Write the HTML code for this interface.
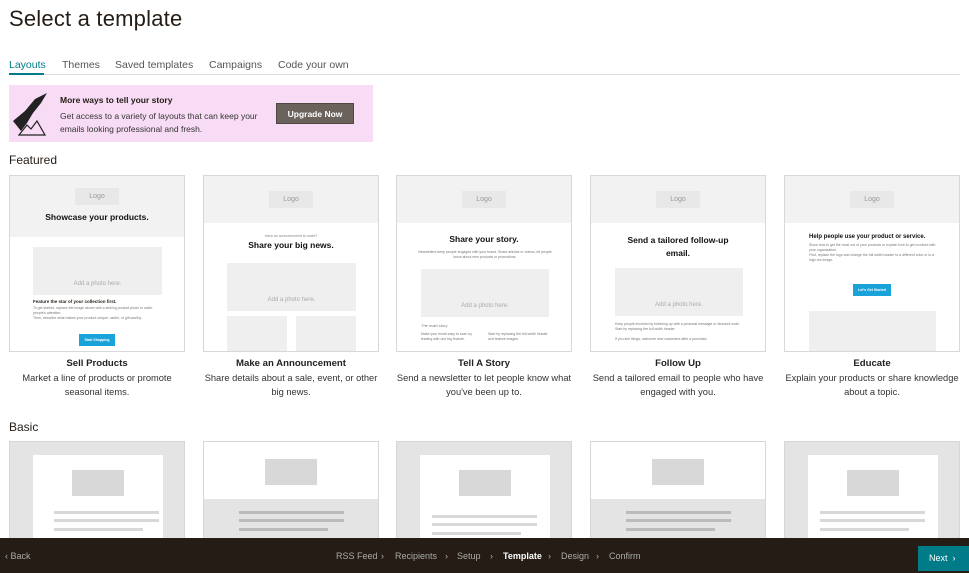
<!DOCTYPE html>
<html><head><meta charset="utf-8"><style>
*{box-sizing:border-box;margin:0;padding:0}
body{width:969px;height:573px;overflow:hidden;background:#fff;font-family:"Liberation Sans",sans-serif;color:#241c15;position:relative}
.abs{position:absolute}
h1{position:absolute;left:9px;top:6px;font-size:22px;font-weight:400;letter-spacing:0.2px}
.tabs{position:absolute;left:9px;top:59px;font-size:10.5px;color:#555}
.tabs span{position:absolute;white-space:nowrap}
.line{position:absolute;left:9px;right:9px;top:74px;height:1px;background:#ddd}
.banner{position:absolute;left:9px;top:85px;width:364px;height:57px;background:#f8dcf5}
.card{position:absolute;width:176px;height:177px;border:1px solid #d8d8d8;background:#fff;overflow:hidden;top:175px}
.hd{background:#f2f2f2;position:absolute;left:0;right:0;top:0}
.logo{position:absolute;width:44px;height:17px;background:#e8e8e8;font-size:7px;color:#999;text-align:center;line-height:17px;left:65px}
.ph{position:absolute;background:#efefef;font-size:6px;color:#aaa;text-align:center}
.t{position:absolute;left:0;right:0;text-align:center;font-weight:bold;color:#111}
.sm{position:absolute;font-size:3.5px;color:#777;line-height:5px}
.btn{position:absolute;background:#1aa3d9;color:#fff;font-size:3.5px;font-weight:bold;text-align:center}
.cap{position:absolute;width:184px;text-align:center;font-size:9.3px;line-height:14px;color:#333;top:357px}
.cap b{display:block;font-weight:bold;color:#222;font-size:9.6px}
.bc{position:absolute;top:441px;width:176px;height:100px;border:1px solid #d6d6d6;overflow:hidden}
.bar{position:absolute;height:3px;background:#d8d8d8}
.foot{position:absolute;left:0;top:538px;width:969px;height:35px;background:#241c15;color:#aaa;font-size:9px}
.foot span{position:absolute;top:13px;white-space:nowrap}
</style></head><body>
<h1>Select a template</h1>
<div class="tabs">
<span style="left:0;color:#007c89">Layouts</span>
<span style="left:53px">Themes</span>
<span style="left:106px">Saved templates</span>
<span style="left:200px">Campaigns</span>
<span style="left:269px">Code your own</span>
</div>
<div class="line"></div>
<div class="abs" style="left:9px;top:73px;width:35px;height:2px;background:#007c89"></div>
<div class="banner">
<svg class="abs" style="left:2px;top:6px" width="44" height="46" viewBox="0 0 44 46"><path d="M2 30 L14 20 L24 8 L36 2 L30 12 L22 22 L16 32 L10 40 Z" fill="#222"/><path d="M8 44 L16 34 L20 38 L26 30 L34 44 Z" fill="none" stroke="#222" stroke-width="1.2"/></svg>
<div class="abs" style="left:51px;top:10px;font-size:8.5px;font-weight:bold">More ways to tell your story</div>
<div class="abs" style="left:51px;top:25px;font-size:8.5px;line-height:13px;color:#333">Get access to a variety of layouts that can keep your<br>emails looking professional and fresh.</div>
<div class="abs" style="left:267px;top:18px;width:78px;height:21px;background:#6b625c;color:#fff;font-size:8.5px;font-weight:bold;text-align:center;line-height:21px;border:1px solid #4f4742">Upgrade Now</div>
</div>
<div class="abs" style="left:9px;top:153px;font-size:12px">Featured</div>

<div class="card" style="left:9px">
<div class="hd" style="height:61px"></div><div class="logo" style="top:12px">Logo</div>
<div class="t" style="top:36px;font-size:8.5px">Showcase your products.</div>
<div class="ph" style="left:23px;top:71px;width:129px;height:48px;padding-top:34px">Add a photo here.</div>
<div class="abs" style="left:23px;top:123px;font-size:4.5px;font-weight:bold">Feature the star of your collection first.</div>
<div class="sm" style="left:23px;top:130px;width:130px">To get started, replace the image above with a striking product photo to catch people's attention.<br>Then, describe what makes your product unique, useful, or gift-worthy.</div>
<div class="btn" style="left:69px;top:158px;width:36px;height:12px;line-height:12px">Start Shopping</div>
</div>
<div class="card" style="left:203px">
<div class="hd" style="height:47px"></div><div class="logo" style="top:15px">Logo</div>
<div class="abs" style="left:0;right:0;top:58px;text-align:center;font-size:3.5px;color:#888;font-style:italic">Have an announcement to make?</div>
<div class="t" style="top:64px;font-size:8.5px">Share your big news.</div>
<div class="ph" style="left:23px;top:87px;width:129px;height:48px;padding-top:34px">Add a photo here.</div>
<div class="ph" style="left:23px;top:140px;width:60px;height:40px"></div>
<div class="ph" style="left:92px;top:140px;width:60px;height:40px"></div>
</div>
<div class="card" style="left:396px">
<div class="hd" style="height:47px"></div><div class="logo" style="top:15px">Logo</div>
<div class="t" style="top:58px;font-size:8.5px">Share your story.</div>
<div class="sm" style="left:20px;top:74px;width:136px;text-align:center">Newsletters keep people engaged with your brand. Share articles or videos, let people know about new products or promotions.</div>
<div class="ph" style="left:24px;top:93px;width:128px;height:48px;padding-top:34px">Add a photo here.</div>
<div class="abs" style="left:24px;top:147px;font-size:4px;color:#777;font-style:italic">The main story</div>
<div class="sm" style="left:24px;top:156px;width:55px">Make your email easy to scan by leading with one big feature.</div>
<div class="sm" style="left:91px;top:156px;width:60px">Start by replacing the full-width header and feature images.</div>
</div>
<div class="card" style="left:590px">
<div class="hd" style="height:47px"></div><div class="logo" style="top:15px">Logo</div>
<div class="t" style="top:58px;font-size:8.5px;line-height:13px">Send a tailored follow-up<br>email.</div>
<div class="ph" style="left:24px;top:92px;width:128px;height:48px;padding-top:34px">Add a photo here.</div>
<div class="sm" style="left:24px;top:146px;width:128px">Keep people involved by following up with a personal message or discount code. Start by replacing the full-width header.<br><br>If you sell things, welcome new customers after a purchase.</div>
</div>
<div class="card" style="left:784px">
<div class="hd" style="height:47px"></div><div class="logo" style="top:15px">Logo</div>
<div class="abs" style="left:24px;top:58px;font-size:6px;font-weight:bold;color:#111">Help people use your product or service.</div>
<div class="sm" style="left:24px;top:67px;width:130px">Show how to get the most out of your products or explain how to get involved with your organization.<br>First, replace the logo and change the full-width header to a different color or to a high-res image.</div>
<div class="btn" style="left:68px;top:108px;width:38px;height:12px;line-height:12px">Let's Get Started</div>
<div class="ph" style="left:24px;top:135px;width:127px;height:45px"></div>
</div>

<div class="cap" style="left:5px"><b>Sell Products</b>Market a line of products or promote seasonal items.</div>
<div class="cap" style="left:199px"><b>Make an Announcement</b>Share details about a sale, event, or other big news.</div>
<div class="cap" style="left:392px"><b>Tell A Story</b>Send a newsletter to let people know what you've been up to.</div>
<div class="cap" style="left:586px"><b>Follow Up</b>Send a tailored email to people who have engaged with you.</div>
<div class="cap" style="left:780px"><b>Educate</b>Explain your products or share knowledge about a topic.</div>

<div class="abs" style="left:9px;top:420px;font-size:12px">Basic</div>

<div class="bc" style="left:9px;background:#e4e4e4"><div class="abs" style="left:23px;top:13px;width:130px;height:90px;background:#fff"></div><div class="abs" style="left:62px;top:28px;width:52px;height:26px;background:#d8d8d8"></div><div class="bar" style="left:44px;top:69px;width:105px"></div><div class="bar" style="left:44px;top:77px;width:105px"></div><div class="bar" style="left:44px;top:86px;width:89px"></div></div>
<div class="bc" style="left:203px;background:#fff"><div class="abs" style="left:0;right:0;top:57px;height:50px;background:#e4e4e4"></div><div class="abs" style="left:61px;top:17px;width:52px;height:26px;background:#d8d8d8"></div><div class="bar" style="left:35px;top:69px;width:105px;background:#bbb"></div><div class="bar" style="left:35px;top:77px;width:105px;background:#bbb"></div><div class="bar" style="left:35px;top:86px;width:89px;background:#bbb"></div></div>
<div class="bc" style="left:396px;background:#e4e4e4"><div class="abs" style="left:23px;top:13px;width:130px;height:90px;background:#fff"></div><div class="abs" style="left:62px;top:28px;width:52px;height:26px;background:#d8d8d8"></div><div class="bar" style="left:35px;top:73px;width:105px"></div><div class="bar" style="left:35px;top:81px;width:105px"></div><div class="bar" style="left:35px;top:90px;width:89px"></div></div>
<div class="bc" style="left:590px;background:#fff"><div class="abs" style="left:0;right:0;top:57px;height:50px;background:#e4e4e4"></div><div class="abs" style="left:61px;top:17px;width:52px;height:26px;background:#d8d8d8"></div><div class="bar" style="left:35px;top:69px;width:105px;background:#bbb"></div><div class="bar" style="left:35px;top:77px;width:105px;background:#bbb"></div><div class="bar" style="left:35px;top:86px;width:89px;background:#bbb"></div></div>
<div class="bc" style="left:784px;background:#e4e4e4"><div class="abs" style="left:23px;top:13px;width:130px;height:90px;background:#fff"></div><div class="abs" style="left:62px;top:28px;width:52px;height:26px;background:#d8d8d8"></div><div class="bar" style="left:35px;top:69px;width:105px"></div><div class="bar" style="left:35px;top:77px;width:105px"></div><div class="bar" style="left:35px;top:86px;width:89px"></div></div>

<div class="foot">
<span style="left:5px">‹ Back</span>
<span style="left:336px">RSS Feed</span><span style="left:381px">›</span>
<span style="left:395px">Recipients</span><span style="left:445px">›</span>
<span style="left:457px">Setup</span><span style="left:490px">›</span>
<span style="left:503px;color:#fff;font-weight:bold">Template</span><span style="left:548px">›</span>
<span style="left:561px">Design</span><span style="left:596px">›</span>
<span style="left:609px">Confirm</span>
<div class="abs" style="left:918px;top:8px;width:51px;height:25px;background:#007c89;color:#fff;font-size:9px;line-height:25px;padding-left:11px">Next &nbsp;›</div>
</div>
</body></html>
